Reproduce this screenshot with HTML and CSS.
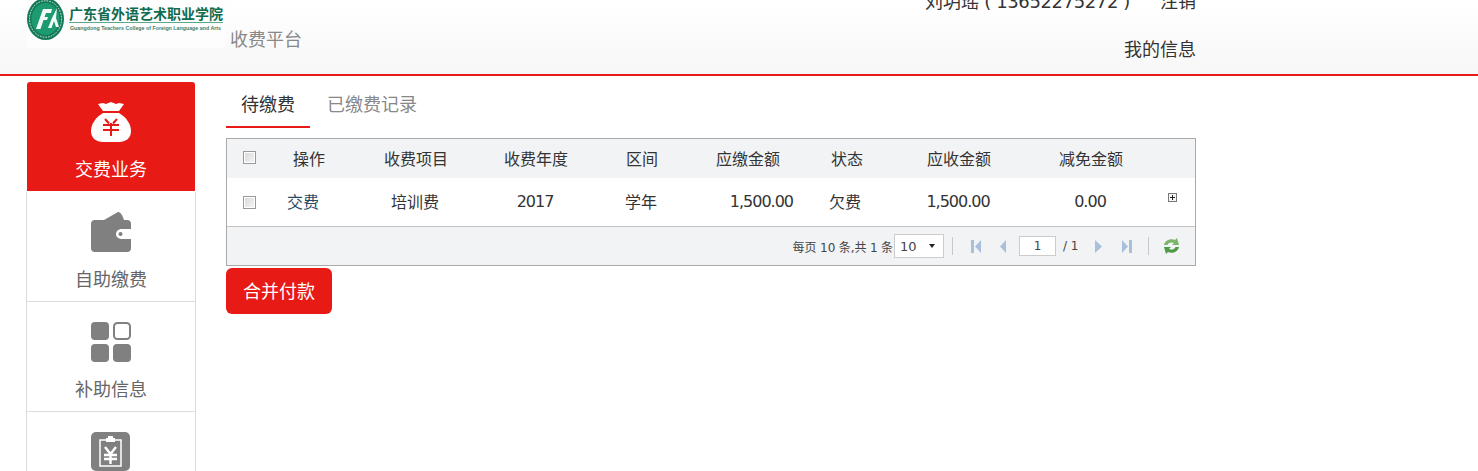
FILE: index.html
```html
<!DOCTYPE html>
<html lang="zh-CN">
<head>
<meta charset="utf-8">
<title>收费平台</title>
<link rel="stylesheet" href="styles.css">
</head>
<body>
<header class="header">
  <div class="brand">
    <svg class="logo" viewBox="0 0 198 48" width="198" height="48">
      <ellipse cx="18.5" cy="19" rx="18.5" ry="21" fill="#157a58"/>
      <ellipse cx="18.5" cy="19" rx="16" ry="18.2" fill="none" stroke="#d5e9dc" stroke-width="1" stroke-dasharray="1.6 1.2"/>
      <ellipse cx="18.5" cy="19" rx="14" ry="16" fill="#1c9a70"/>
      <path d="M9 29 L16 9 H25 L24 13 H19 L17.5 17 H21 L20 20 H16.5 L13.5 29Z" fill="#f4fbf6"/>
      <path d="M21 28 L25 18 L30 8 L29 18 L32 27 H29 L27 21 L24.5 28Z" fill="#f4fbf6"/>
      <text class="logo-cn" x="42" y="19" textLength="154" lengthAdjust="spacing">广东省外语艺术职业学院</text>
      <rect x="42" y="22" width="154" height="1" fill="#5aa98c"/>
      <text class="logo-en" x="43" y="30" textLength="151" lengthAdjust="spacingAndGlyphs">Guangdong Teachers College of Foreign Language and Arts</text>
    </svg>
    <div class="platform">收费平台</div>
  </div>
  <div class="account">
    <div class="user-line"><span>刘玥瑶</span><span class="phone"> ( 13652275272 )</span><a class="logout">注销</a></div>
    <div class="my-info">我的信息</div>
  </div>
</header>

<div class="page">
  <nav class="side">
    <div class="side-item active">
      <svg class="side-icon" viewBox="0 0 40 40" width="40" height="40">
        <path d="M7 2 L12 1 L15 2 L20 0 L25 2 L28 1 L33 2 L28 9 H12Z" fill="#fff"/>
        <path d="M12 11 H28 C35 15 40 22 40 29 C40 36 35 40 28 40 H12 C5 40 0 36 0 29 C0 22 5 15 12 11Z" fill="#fff"/>
        <path d="M14 17 L18 21.5 M26 17 L22 21.5 M12 23 H28 M12 28 H28 M20 21 V34" stroke="#e81a16" stroke-width="2" fill="none"/>
      </svg>
      <div class="side-label">交费业务</div>
    </div>
    <div class="side-item">
      <svg class="side-icon" viewBox="0 0 40 40" width="40" height="40">
        <path d="M13 8 L27 0 C29 0 31 2 33 8Z" fill="#808080"/>
        <rect x="0" y="8" width="40" height="32" rx="4" fill="#808080"/>
        <path d="M40 17 H31 C27 17 25 19.5 25 22 C25 24.5 27 27 31 27 H40Z" fill="#fff"/>
        <circle cx="29.5" cy="22" r="2" fill="#808080"/>
      </svg>
      <div class="side-label">自助缴费</div>
    </div>
    <div class="side-item">
      <svg class="side-icon" viewBox="0 0 40 40" width="40" height="40">
        <rect x="0" y="0" width="18" height="18" rx="4" fill="#808080"/>
        <rect x="23" y="1" width="16" height="16" rx="3.5" fill="#fff" stroke="#808080" stroke-width="2"/>
        <rect x="0" y="22" width="18" height="18" rx="4" fill="#808080"/>
        <rect x="22" y="22" width="18" height="18" rx="4" fill="#808080"/>
      </svg>
      <div class="side-label">补助信息</div>
    </div>
    <div class="side-item">
      <svg class="side-icon" viewBox="0 0 40 40" width="40" height="40">
        <rect x="0" y="0" width="39" height="39" rx="5" fill="#808080"/>
        <rect x="9" y="8" width="21" height="26" fill="none" stroke="#fff" stroke-width="1.5"/>
        <path d="M15 10 V6 H17 V4 H22 V6 H24 V10Z" fill="#fff"/>
        <path d="M14 15 L19.5 22 L25 15 M13 23 H26 M13 27 H26 M19.5 21 V32" stroke="#fff" stroke-width="2.4" fill="none"/>
      </svg>
    </div>
  </nav>

  <main class="main">
    <div class="tabs">
      <div class="tab current">待缴费</div>
      <div class="tab">已缴费记录</div>
    </div>

    <section class="grid">
      <div class="row head">
        <div class="cell"><span class="check"></span></div>
        <div class="cell">操作</div>
        <div class="cell">收费项目</div>
        <div class="cell">收费年度</div>
        <div class="cell">区间</div>
        <div class="cell">应缴金额</div>
        <div class="cell">状态</div>
        <div class="cell">应收金额</div>
        <div class="cell">减免金额</div>
        <div class="cell"></div>
      </div>
      <div class="row body">
        <div class="cell"><span class="check"></span></div>
        <div class="cell action"><a class="pay-link">交费</a></div>
        <div class="cell shift">培训费</div>
        <div class="cell shift num">2017</div>
        <div class="cell shift">学年</div>
        <div class="cell amount num">1,500.00</div>
        <div class="cell shift status">欠费</div>
        <div class="cell shift num">1,500.00</div>
        <div class="cell shift num">0.00</div>
        <div class="cell expand"><span class="plus"></span></div>
      </div>
      <div class="pager">
        <span class="pager-text">每页 10 条,共 1 条</span>
        <span class="size-select">10<i class="caret"></i></span>
        <i class="sep sep-a"></i>
        <svg class="pg pg-first" viewBox="0 0 12 14" width="12" height="14"><path d="M1 1 H4 V14 H1Z M11 1 V14 L5 7.5Z" fill="#a9c0dd"/></svg>
        <svg class="pg pg-prev" viewBox="0 0 12 14" width="12" height="14"><path d="M9 1 V14 L3 7.5Z" fill="#a9c0dd"/></svg>
        <span class="page-input">1</span>
        <span class="page-total">/ 1</span>
        <svg class="pg pg-next" viewBox="0 0 12 14" width="12" height="14"><path d="M3 1 V14 L10 7.5Z" fill="#a9c0dd"/></svg>
        <svg class="pg pg-last" viewBox="0 0 12 14" width="12" height="14"><path d="M1 1 V14 L7 7.5Z M8 1 H11 V14 H8Z" fill="#a9c0dd"/></svg>
        <i class="sep sep-b"></i>
        <svg class="pg-refresh" viewBox="0 0 17 16" width="17" height="16">
          <path d="M1 7 C2 2 8 0 12 2 L14 0 L16 7 H9 L11 5 C8 3.5 5 5 4.5 7Z" fill="#7db56a"/>
          <path d="M16 9 C15 14 9 16 5 14 L3 16 L1 9 H8 L6 11 C9 12.5 12 11 12.5 9Z" fill="#4f9a45"/>
        </svg>
      </div>
    </section>

    <button class="merge-btn" type="button">合并付款</button>
  </main>
</div>
</body>
</html>
```
FILE: styles.css
```css
* { box-sizing: border-box; }
html, body { margin: 0; height: 100%; overflow: hidden; background: #fff; }
body { font-family: "Noto Sans CJK SC", sans-serif; color: #333; }

.header {
  height: 76px;
  width: 100%;
  border-bottom: 2px solid #e81a16;
  background: linear-gradient(#fff, #f7f7f7);
  display: flex;
  justify-content: space-between;
  padding: 0 282px 0 27px;
  overflow: hidden;
}
.brand { display: flex; align-items: flex-start; }
.logo { display: block; background: #fdfdfd; }
.logo-cn { font: 700 14px "Noto Sans CJK SC", sans-serif; fill: #0f6b50; }
.logo-en { font: 700 5.5px "Liberation Sans", sans-serif; fill: #3d7f6c; }
.platform {
  margin: 20px 0 0 5px;
  font: 18px/36px "Noto Sans CJK SC", sans-serif;
  color: #888;
}
.account { text-align: right; font-size: 18px; color: #333; }
.user-line {
  margin-top: -18px;
  height: 36px;
  line-height: 36px;
  white-space: nowrap;
}
.phone { font-family: "DejaVu Sans", sans-serif; letter-spacing: -0.38px; }
.logout { margin-left: 30px; }
.my-info { margin-top: 12px; line-height: 36px; }

.page { display: flex; padding: 6px 0 0 26px; align-items: flex-start; }

.side { width: 170px; flex: none; font-size: 18px; }
.side-item {
  height: 110px;
  padding-top: 20px;
  text-align: center;
  border: 1px solid #dcdcdc;
  border-width: 0 1px 1px;
  color: #666;
}
.side-item.active {
  margin: 0 1px;
  border: 0;
  border-bottom: 1px solid #fff;
  background: #e81a16 padding-box;
  border-radius: 3px 3px 0 0;
  color: #fff;
}
.side-icon { display: block; margin: 0 auto; }
.side-label { margin-top: 13px; line-height: 26px; }

.main { width: 970px; margin-left: 30px; flex: none; }

.tabs { display: flex; height: 46px; font-size: 18px; line-height: 42px; }
.tab { padding: 0 15px; color: #888; }
.tab + .tab { margin-left: 2px; }
.tab.current { color: #333; border-bottom: 2px solid #e81a16; }

.grid {
  margin-top: 10px;
  border: 1px solid #a9a9a9;
  font-size: 16px;
  color: #333;
}
.row {
  display: grid;
  grid-template-columns: 45px 74px 140px 100px 112px 100px 98px 126px 138px 35px;
}
.head { height: 39px; background: #f2f3f5; padding-bottom: 2px; }
.body { height: 49px; border-bottom: 1px solid #c4c4c4; }
.cell { display: flex; align-items: center; justify-content: center; }
.shift { padding: 0 2px 2px 0; }
.action { padding: 0 12px 2px 0; }
.pay-link { color: #2a4a63; }
.amount { justify-content: flex-end; padding: 0 5px 2px 0; }
.status { padding-right: 4px; }
.num { font-family: "DejaVu Sans", sans-serif; letter-spacing: -1px; }
.expand { align-items: flex-start; padding: 15px 11px 0 0; }

.check {
  width: 13px;
  height: 13px;
  display: block;
  border: 1px solid #9a9a9a;
  background: linear-gradient(135deg, #d8d8d8, #f6f6f6);
  box-shadow: inset 0 0 0 1px #fff;
}
.body .check { margin-right: 1px; }
.plus {
  position: relative;
  display: block;
  width: 9px;
  height: 9px;
  border: 1px solid #777;
  background: #f4f4f4;
}
.plus::before, .plus::after { content: ""; position: absolute; background: #222; }
.plus::before { left: 1px; right: 1px; top: 3px; height: 1px; }
.plus::after { top: 1px; bottom: 1px; left: 3px; width: 1px; }

.pager {
  height: 38px;
  background: #f2f3f5;
  display: flex;
  align-items: center;
  justify-content: flex-end;
  padding-right: 15px;
  font: 12px "DejaVu Sans", "Noto Sans CJK SC", sans-serif;
  color: #444;
}
.pager-text { word-spacing: -0.4px; }
.size-select {
  width: 50px;
  height: 24px;
  margin-left: 1px;
  padding: 0 8px 0 5px;
  display: flex;
  align-items: center;
  justify-content: space-between;
  border: 1px solid #ccc;
  background: #fff;
  font-size: 13px;
}
.caret { width: 0; height: 0; border: 3.5px solid transparent; border-top: 4px solid #222; border-bottom: 0; }
.sep { width: 1px; height: 18px; background: #c8c8c8; display: block; flex: none; }
.sep-a { margin-left: 8px; }
.pg { display: block; flex: none; }
.pg-first { margin-left: 17px; }
.pg-prev { margin-left: 15px; }
.page-input {
  margin-left: 10px;
  width: 37px;
  height: 20px;
  line-height: 18px;
  text-align: center;
  border: 1px solid #ccc;
  background: #fff;
  flex: none;
}
.page-total { margin-left: 7px; width: 16px; flex: none; white-space: nowrap; }
.pg-next { margin-left: 13px; }
.pg-last { margin-left: 17px; }
.sep-b { margin-left: 15px; }
.pg-refresh { margin-left: 14px; display: block; flex: none; }

.merge-btn {
  display: block;
  margin-top: 2px;
  width: 106px;
  height: 46px;
  border: 0;
  border-radius: 6px;
  background: #e81a16;
  color: #fff;
  font: 18px "Noto Sans CJK SC", sans-serif;
  padding: 0 0 2px;
}
```
